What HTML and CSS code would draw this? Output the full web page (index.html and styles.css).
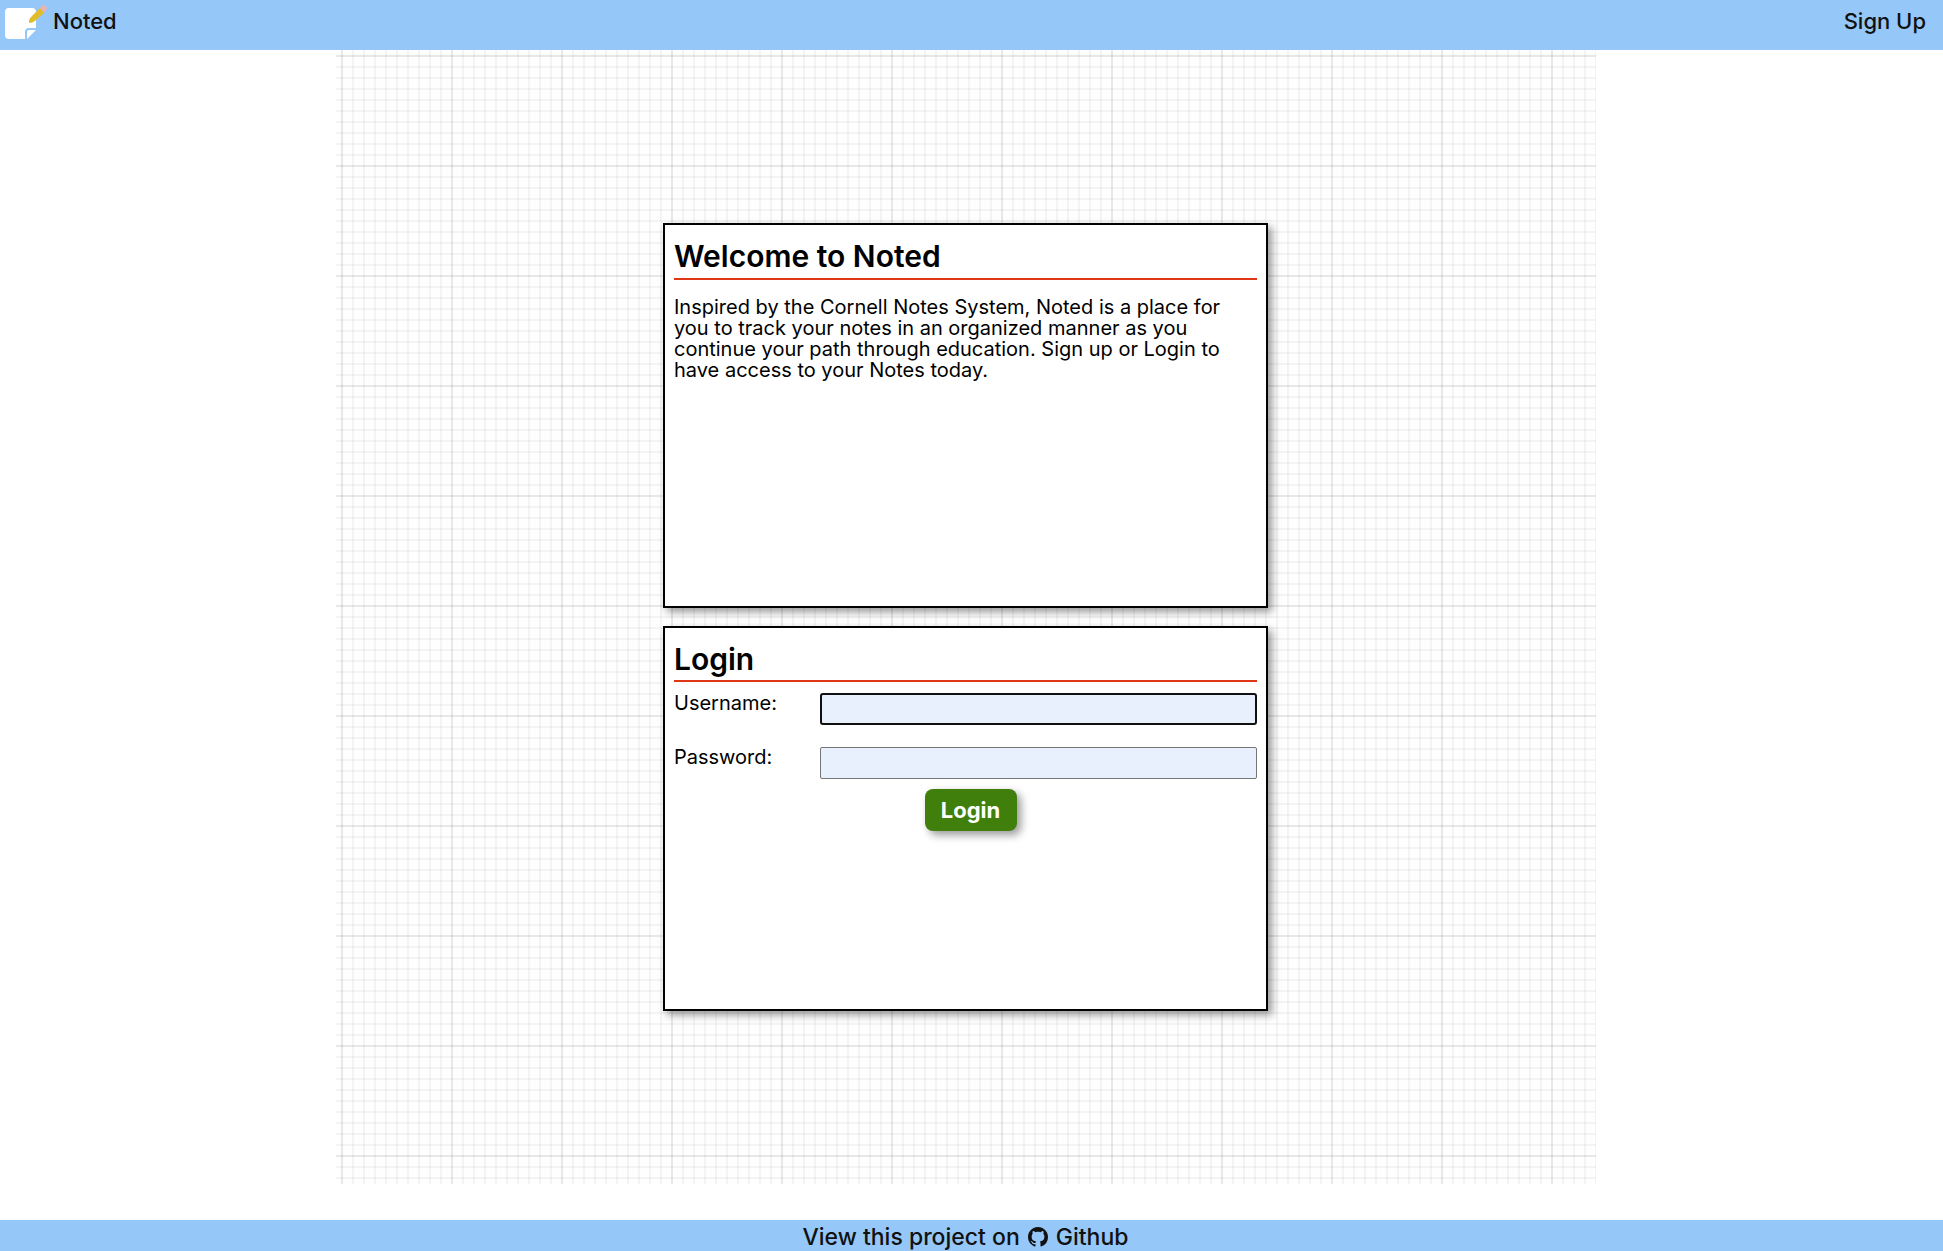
FILE: index.html
```html
<!DOCTYPE html>
<html lang="en">
<head>
<meta charset="utf-8">
<meta name="viewport" content="width=device-width, initial-scale=1">
<title>Noted</title>
<link rel="stylesheet" href="styles.css">
</head>
<body>
<header class="navbar">
  <a class="brand" href="#">
    <svg class="brand-icon" viewBox="0 0 44 36" aria-hidden="true">
      <path fill="#fff" d="M4 3h23a4 4 0 0 1 4 4v16h-7a4 4 0 0 0-4 4v7H4a4 4 0 0 1-4-4V7a4 4 0 0 1 4-4z"/>
      <path fill="#fff" d="M22 34v-7a2 2 0 0 1 2-2h7z"/>
      <path fill="#e1bd2b" d="M24 18c0-4 1-5 3-7l8-8 4 5-8 7c-2 2-4 3-7 3z"/>
      <path fill="#efb0ae" d="M35 3l2-2a2 2 0 0 1 3 0l1 1a2 2 0 0 1 0 3l-2 3z"/>
    </svg>
    <span>Noted</span>
  </a>
  <a class="nav-link" href="#">Sign Up</a>
</header>
<main class="page">
  <div class="paper">
    <section class="card">
      <h1 class="card-title">Welcome to Noted</h1>
      <p class="card-text">Inspired by the Cornell Notes System, Noted is a place for<br>you to track your notes in an organized manner as you<br>continue your path through education. Sign up or Login to<br>have access to your Notes today.</p>
    </section>
    <section class="card card-login">
      <h2 class="card-title">Login</h2>
      <form class="login-form">
        <div class="field">
          <label for="username">Username:</label>
          <input class="is-active" id="username" name="username" type="text">
        </div>
        <div class="field">
          <label for="password">Password:</label>
          <input id="password" name="password" type="password">
        </div>
        <button class="login-button" type="submit">Login</button>
      </form>
    </section>
  </div>
</main>
<footer class="footer">
  <a class="footer-link" href="#">
    <span>View this project on</span>
    <svg class="github-icon" viewBox="0 0 16 16" aria-hidden="true"><path fill="currentColor" d="M8 0C3.58 0 0 3.58 0 8c0 3.54 2.29 6.53 5.47 7.59.4.07.55-.17.55-.38 0-.19-.01-.82-.01-1.49-2.01.37-2.53-.49-2.69-.94-.09-.23-.48-.94-.82-1.13-.28-.15-.68-.52-.01-.53.63-.01 1.08.58 1.23.82.72 1.21 1.87.87 2.33.66.07-.52.28-.87.51-1.07-1.78-.2-3.64-.89-3.64-3.95 0-.87.31-1.59.82-2.15-.08-.2-.36-1.02.08-2.12 0 0 .67-.21 2.2.82.64-.18 1.32-.27 2-.27s1.36.09 2 .27c1.53-1.04 2.2-.82 2.2-.82.44 1.1.16 1.92.08 2.12.51.56.82 1.27.82 2.15 0 3.07-1.87 3.75-3.65 3.95.29.25.54.73.54 1.48 0 1.07-.01 1.93-.01 2.2 0 .21.15.46.55.38A8.01 8.01 0 0 0 16 8c0-4.42-3.58-8-8-8z"/></svg>
    <span>Github</span>
  </a>
</footer>
</body>
</html>
```

FILE: styles.css
```css
* {
  box-sizing: border-box;
}

body {
  display: flex;
  flex-direction: column;
  min-height: 100vh;
  margin: 0;
  background: #fff;
  color: #000;
  font-family: Inter, "DejaVu Sans", sans-serif;
  font-size: 20px;
  line-height: 21px;
}

a {
  color: #111;
  text-decoration: none;
}

.navbar {
  display: flex;
  justify-content: space-between;
  height: 50px;
  padding: 5px 17px 0 5px;
  background: #95c8f8;
  font-size: 22px;
  font-weight: 500;
  line-height: 32px;
}

.brand {
  display: flex;
  gap: 4px;
}

.brand-icon {
  width: 44px;
  height: 36px;
}

.page {
  display: flex;
  flex: 1;
  justify-content: center;
  padding: 0 12px 36px 0;
}

.paper {
  display: flex;
  flex-direction: column;
  align-items: center;
  justify-content: center;
  gap: 18px;
  width: 100%;
  max-width: 1260px;
  padding: 18px;
  background-color: #fefefe;
  background-image:
    linear-gradient(to right, rgba(0, 0, 0, 0.05) 2px, transparent 2px),
    linear-gradient(to bottom, rgba(0, 0, 0, 0.05) 2px, transparent 2px),
    linear-gradient(to right, rgba(0, 0, 0, 0.04) 2px, transparent 2px),
    linear-gradient(to bottom, rgba(0, 0, 0, 0.04) 2px, transparent 2px);
  background-position: 5px 5px;
  background-size: 110px 110px, 110px 110px, 11px 11px, 11px 11px;
}

.card {
  width: 100%;
  max-width: 605px;
  min-height: 385px;
  padding: 14px 9px;
  border: 2px solid #000;
  background: #fff;
  box-shadow: 4px 4px 8px rgba(0, 0, 0, 0.4);
}

.card-title {
  margin: 0 0 17px;
  padding-bottom: 5px;
  border-bottom: 2px solid #e03616;
  font-size: 30px;
  font-weight: 600;
  line-height: 34px;
}

.card-text {
  margin: 0;
}

.card-login .card-title {
  margin-bottom: 11px;
  padding-bottom: 4px;
}

.login-form {
  display: flex;
  flex-direction: column;
}

.field {
  display: grid;
  grid-template-columns: 1fr 3fr;
  height: 54px;
}

.field input {
  width: 100%;
  height: 32px;
  padding: 2px 6px;
  border: 1px solid #767676;
  border-radius: 2px;
  outline: none;
  background: #e8f0fe;
  font: inherit;
}

.field .is-active {
  border: 2px solid #101010;
  border-radius: 3px;
}

.login-button {
  align-self: center;
  width: 92px;
  height: 42px;
  margin: -12px 0 0 10px;
  padding: 0;
  border: 0;
  border-radius: 8px;
  background: #417f0d;
  box-shadow: 4px 4px 8px rgba(0, 0, 0, 0.4);
  color: #fff;
  font-family: inherit;
  font-size: 22px;
  font-weight: 700;
  line-height: 40px;
}

.footer {
  display: flex;
  justify-content: center;
  height: 31px;
  padding: 2px 12px 0 0;
  background: #95c8f8;
  font-size: 23px;
  font-weight: 500;
  line-height: 30px;
}

.footer-link {
  display: flex;
  gap: 8px;
}

.github-icon {
  width: 20px;
  height: 20px;
  margin-top: 5px;
}
```
